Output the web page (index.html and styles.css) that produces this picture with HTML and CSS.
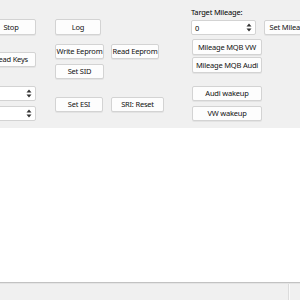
FILE: index.html
```html
<!DOCTYPE html>
<html lang="en">
<head>
    <meta charset="UTF-8">
    <title>Tool</title>
    <link rel="stylesheet" href="styles.css">
</head>
<body>
    <div class="panel">
        <div class="col col1">
            <button class="btn stop">Stop</button>
            <button class="btn keys">Read Keys</button>
            <div class="spin spin-a"><span class="val"></span><svg class="arrows" width="6" height="9" viewBox="0 0 6 9"><path d="M3 0.5 L5.5 3.5 L0.5 3.5 Z M3 8.5 L5.5 5.5 L0.5 5.5 Z" fill="#333"/></svg></div>
            <div class="spin spin-b"><span class="val"></span><svg class="arrows" width="6" height="9" viewBox="0 0 6 9"><path d="M3 0.5 L5.5 3.5 L0.5 3.5 Z M3 8.5 L5.5 5.5 L0.5 5.5 Z" fill="#333"/></svg></div>
        </div>
        <div class="col col2">
            <button class="btn log">Log</button>
            <button class="btn weep">Write Eeprom</button>
            <button class="btn sid">Set SID</button>
            <button class="btn esi">Set ESI</button>
        </div>
        <div class="col col3">
            <button class="btn reep">Read Eeprom</button>
            <button class="btn sri">SRI: Reset</button>
        </div>
        <div class="col col4">
            <label class="lbl">Target Mileage:</label>
            <div class="spin spin-main"><span class="val">0</span><svg class="arrows" width="6" height="9" viewBox="0 0 6 9"><path d="M3 0.5 L5.5 3.5 L0.5 3.5 Z M3 8.5 L5.5 5.5 L0.5 5.5 Z" fill="#333"/></svg></div>
            <button class="btn mvw">Mileage MQB VW</button>
            <button class="btn maudi">Mileage MQB Audi</button>
            <button class="btn awake">Audi wakeup</button>
            <button class="btn vwake">VW wakeup</button>
        </div>
        <div class="col col5">
            <button class="btn setm">Set Mileage</button>
        </div>
    </div>
    <div class="output"></div>
    <div class="status">
        <div class="status-main"></div>
        <div class="status-side"></div>
    </div>
</body>
</html>
```
FILE: styles.css
```css
body {
    margin: 0;
    padding: 0;
    background-color: #f0f0f0;
    font-family: 'Noto Sans', 'Open Sans', sans-serif;
    font-size: 7.5px;
    color: #000;
    width: 300px;
    height: 300px;
    overflow: hidden;
    display: flex;
    flex-direction: column;
}
.panel {
    height: 128px;
    display: flex;
    margin-left: -14px;
    flex-shrink: 0;
}
.col {
    display: flex;
    flex-direction: column;
    align-items: flex-start;
}
.btn {
    font-family: inherit;
    font-size: 7.5px;
    letter-spacing: -0.2px;
    white-space: nowrap;
    overflow: visible;
    color: #111;
    background: #fdfdfd;
    border: 1px solid #d3d3d3;
    border-radius: 2px;
    box-shadow: 0 1px 0 rgba(0, 0, 0, 0.05);
    height: 15px;
    padding: 0;
    line-height: 13px;
    text-align: center;
    box-sizing: border-box;
}
.spin {
    background: #fff;
    border: 1px solid #d3d3d3;
    border-radius: 2px;
    box-sizing: border-box;
    height: 15px;
    display: flex;
    align-items: center;
    justify-content: space-between;
    padding: 0 3px 0 3px;
}
.arrows {
    display: block;
}
/* column 1 */
.col1 {
    width: 50px;
    padding-top: 19px;
}
.stop { width: 50px; height: 16px; }
.keys { width: 50px; margin-top: 17px; }
.spin-a { width: 50px; margin-top: 19px; }
.spin-b { width: 50px; margin-top: 5px; }
/* column 2 */
.col2 {
    width: 49px;
    margin-left: 19px;
    padding-top: 19px;
}
.log { width: 46px; height: 16px; }
.weep { width: 49px; margin-top: 9px; }
.sid { width: 49px; margin-top: 5px; }
.esi { width: 48px; margin-top: 18px; }
/* column 3 */
.col3 {
    width: 53px;
    margin-left: 7px;
    padding-top: 44px;
}
.reep { width: 48px; }
.sri { width: 53px; margin-top: 38px; }
/* column 4 */
.col4 {
    width: 71px;
    margin-left: 27px;
    padding-top: 7px;
}
.lbl {
    height: 13px;
    line-height: 11px;
    letter-spacing: -0.2px;
}
.spin-main { width: 65px; }
.mvw { width: 70px; height: 16px; margin-top: 4px; margin-left: 1px; }
.maudi { width: 70px; height: 16px; margin-top: 2px; margin-left: 1px; }
.awake { width: 70px; margin-top: 13px; margin-left: 1px; }
.vwake { width: 70px; margin-top: 5px; margin-left: 1px; }
/* column 5 */
.col5 {
    margin-left: 2px;
    padding-top: 20px;
}
.setm { width: 50px; }
.output {
    flex: 1;
    background: #fff;
    border-bottom: 1px solid #c2c2c2;
}
.status {
    height: 16px;
    flex-shrink: 0;
    display: flex;
    border-top: 1px solid #e4e4e4;
}
.status-main {
    width: 288px;
    border-right: 1px solid #dcdcdc;
}
.status-side {
    flex: 1;
    border-left: 1px solid #fafafa;
}
```
